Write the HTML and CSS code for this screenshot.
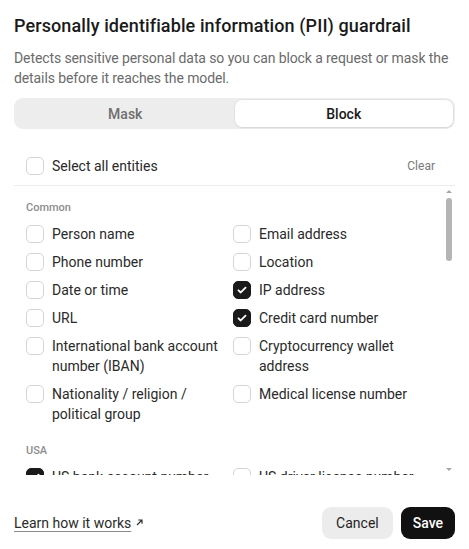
FILE: index.html
```html
<!DOCTYPE html>
<html lang="en">
<head>
<meta charset="utf-8">
<title>PII guardrail</title>
<link rel="stylesheet" href="styles.css">
</head>
<body>
<div class="dialog">
  <h1 class="title">Personally identifiable information (PII) guardrail</h1>
  <p class="desc">Detects sensitive personal data so you can block a request or mask the details before it reaches the model.</p>
  <div class="segmented">
    <button class="seg">Mask</button>
    <button class="seg active">Block</button>
  </div>
  <div class="select-all">
    <label class="item"><span class="box"></span><span class="label">Select all entities</span></label>
    <button class="clear">Clear</button>
  </div>
  <div class="list-wrap">
  <div class="list">
    <div class="section">
      <div class="section-title">Common</div>
      <div class="grid">
        <label class="item"><span class="box"></span><span class="label">Person name</span></label>
        <label class="item"><span class="box"></span><span class="label">Email address</span></label>
        <label class="item"><span class="box"></span><span class="label">Phone number</span></label>
        <label class="item"><span class="box"></span><span class="label">Location</span></label>
        <label class="item"><span class="box"></span><span class="label">Date or time</span></label>
        <label class="item"><span class="box checked"><svg viewBox="0 0 18 18"><path d="M5 9.3l2.6 2.5L13 6.4"/></svg></span><span class="label">IP address</span></label>
        <label class="item"><span class="box"></span><span class="label">URL</span></label>
        <label class="item"><span class="box checked"><svg viewBox="0 0 18 18"><path d="M5 9.3l2.6 2.5L13 6.4"/></svg></span><span class="label">Credit card number</span></label>
        <label class="item"><span class="box"></span><span class="label">International bank account number (IBAN)</span></label>
        <label class="item"><span class="box"></span><span class="label">Cryptocurrency wallet address</span></label>
        <label class="item"><span class="box"></span><span class="label">Nationality / religion / political group</span></label>
        <label class="item"><span class="box"></span><span class="label">Medical license number</span></label>
      </div>
    </div>
    <div class="section">
      <div class="section-title">USA</div>
      <div class="grid">
        <label class="item"><span class="box checked"><svg viewBox="0 0 18 18"><path d="M5 9.3l2.6 2.5L13 6.4"/></svg></span><span class="label">US bank account number</span></label>
        <label class="item"><span class="box"></span><span class="label">US driver license number</span></label>
        <label class="item"><span class="box"></span><span class="label">US ITIN</span></label>
        <label class="item"><span class="box"></span><span class="label">US passport number</span></label>
        <label class="item"><span class="box"></span><span class="label">US Social Security number</span></label>
      </div>
    </div>
    <div class="section">
      <div class="section-title">UK</div>
      <div class="grid">
        <label class="item"><span class="box"></span><span class="label">UK NHS number</span></label>
        <label class="item"><span class="box"></span><span class="label">UK NINO</span></label>
      </div>
    </div>
    <div class="section">
      <div class="section-title">Spain</div>
      <div class="grid">
        <label class="item"><span class="box"></span><span class="label">Spanish NIF</span></label>
        <label class="item"><span class="box"></span><span class="label">Spanish NIE</span></label>
      </div>
    </div>
    <div class="section">
      <div class="section-title">Italy</div>
      <div class="grid">
        <label class="item"><span class="box"></span><span class="label">Italian fiscal code</span></label>
        <label class="item"><span class="box"></span><span class="label">Italian driver license</span></label>
        <label class="item"><span class="box"></span><span class="label">Italian VAT code</span></label>
        <label class="item"><span class="box"></span><span class="label">Italian passport</span></label>
        <label class="item"><span class="box"></span><span class="label">Italian identity card</span></label>
      </div>
    </div>
    <div class="section">
      <div class="section-title">Poland</div>
      <div class="grid">
        <label class="item"><span class="box"></span><span class="label">Polish PESEL</span></label>
      </div>
    </div>
    <div class="section">
      <div class="section-title">Singapore</div>
      <div class="grid">
        <label class="item"><span class="box"></span><span class="label">Singapore NRIC/FIN</span></label>
        <label class="item"><span class="box"></span><span class="label">Singapore UEN</span></label>
      </div>
    </div>
    <div class="section">
      <div class="section-title">Australia</div>
      <div class="grid">
        <label class="item"><span class="box"></span><span class="label">Australian ABN</span></label>
        <label class="item"><span class="box"></span><span class="label">Australian ACN</span></label>
        <label class="item"><span class="box"></span><span class="label">Australian TFN</span></label>
        <label class="item"><span class="box"></span><span class="label">Australian Medicare</span></label>
      </div>
    </div>
    <div class="section">
      <div class="section-title">India</div>
      <div class="grid">
        <label class="item"><span class="box"></span><span class="label">Indian PAN</span></label>
        <label class="item"><span class="box"></span><span class="label">Indian Aadhaar</span></label>
        <label class="item"><span class="box"></span><span class="label">Indian vehicle registration</span></label>
        <label class="item"><span class="box"></span><span class="label">Indian voter ID</span></label>
        <label class="item"><span class="box"></span><span class="label">Indian passport</span></label>
      </div>
    </div>
  </div>
  <div class="scrollbar" aria-hidden="true">
    <span class="sb-arrow up"></span>
    <span class="sb-thumb"></span>
    <span class="sb-arrow down"></span>
  </div>
  </div>
  <div class="footer">
    <a class="learn" href="#">Learn how it works</a>
    <svg class="arrow" viewBox="0 0 7 7"><path d="M1 6L6 1M2.2 1H6v3.8"/></svg>
    <div class="actions">
      <button class="btn cancel">Cancel</button>
      <button class="btn save">Save</button>
    </div>
  </div>
</div>
</body>
</html>
```
FILE: styles.css
```css
* { box-sizing: border-box; }
html, body { margin: 0; padding: 0; background: #fff; }
body {
  font-family: Roboto, "Noto Sans", sans-serif;
  color: #1f1f1f;
}
.dialog {
  width: 469px;
  height: 549px;
  padding: 13px 14px 10px 14px;
  display: flex;
  flex-direction: column;
}
.title {
  margin: 0;
  font-size: 18px;
  line-height: 26px;
  font-weight: 500;
  letter-spacing: 0.1px;
  color: #1a1a1a;
}
.desc {
  margin: 9px 0 0;
  font-size: 14px;
  line-height: 20px;
  letter-spacing: -0.1px;
  color: #6b6b6b;
}
.segmented {
  margin-top: 10px;
  height: 31px;
  background: #ededed;
  border-radius: 9px;
  padding: 2px;
  display: grid;
  grid-template-columns: 1fr 1fr;
}
.seg {
  border: 0;
  background: transparent;
  font: inherit;
  font-size: 14px;
  font-weight: 500;
  color: #6f6f6f;
  border-radius: 7px;
  cursor: pointer;
}
.seg.active {
  background: #fff;
  color: #1a1a1a;
  box-shadow: 0 0 0 0.5px rgba(0,0,0,0.08), 0 1px 2px rgba(0,0,0,0.06);
}
.select-all {
  margin-top: 27px;
  padding: 0 20px 9px 12px;
  border-bottom: 1px solid #ececec;
  display: flex;
  align-items: center;
  justify-content: space-between;
}
.clear {
  border: 0;
  background: transparent;
  font: inherit;
  font-size: 12px;
  color: #7a7a7a;
  padding: 0;
}
.item {
  display: flex;
  align-items: flex-start;
  gap: 8px;
  font-size: 14px;
  line-height: 20px;
  color: #2a2a2a;
}
.box {
  flex: none;
  width: 18px;
  height: 18px;
  margin-top: 1px;
  border: 1px solid #d4d4d4;
  border-radius: 5px;
  background: #fff;
  display: flex;
  align-items: center;
  justify-content: center;
}
.box.checked {
  background: #1a1a1a;
  border-color: #1a1a1a;
}
.box svg {
  width: 18px;
  height: 18px;
  fill: none;
  stroke: #fff;
  stroke-width: 2;
  stroke-linecap: round;
  stroke-linejoin: round;
}
.list-wrap {
  position: relative;
}
.list {
  height: 289px;
  overflow-y: auto;
  padding: 14px 11px 0 12px;
  scrollbar-width: none;
}
.list::-webkit-scrollbar { display: none; }
.scrollbar {
  position: absolute;
  top: 0;
  right: 0;
  width: 12px;
  height: 289px;
  display: flex;
  flex-direction: column;
  align-items: center;
}
.sb-arrow {
  width: 0;
  height: 0;
  border-left: 3px solid transparent;
  border-right: 3px solid transparent;
}
.sb-arrow.up {
  margin-top: 4px;
  border-bottom: 3px solid #a8a8a8;
}
.sb-thumb {
  margin-top: 5px;
  width: 6px;
  height: 63px;
  border-radius: 3px;
  background: #b5b5b5;
}
.sb-arrow.down {
  margin-top: auto;
  margin-bottom: 4px;
  border-top: 3px solid #a8a8a8;
}
.section { margin-bottom: 19px; padding-right: 12px; }
.section-title {
  font-size: 11px;
  line-height: 16px;
  font-weight: 500;
  color: #8d8d8d;
  margin-bottom: 8px;
}
.grid {
  display: grid;
  grid-template-columns: 1fr 1fr;
  column-gap: 8px;
  row-gap: 8px;
}
.footer {
  margin-top: auto;
  display: flex;
  align-items: center;
}
.learn {
  font-size: 14px;
  color: #2a2a2a;
  text-decoration: underline;
  text-decoration-color: #8a8a8a;
  text-underline-offset: 3px;
}
.arrow {
  width: 7px;
  height: 7px;
  margin-left: 5px;
  margin-top: -2px;
  fill: none;
  stroke: #333;
  stroke-width: 1.2;
}
.actions {
  margin-left: auto;
  display: flex;
  gap: 8px;
}
.btn {
  border: 0;
  font: inherit;
  font-size: 14px;
  font-weight: 500;
  height: 32px;
  border-radius: 9px;
  padding: 0 14px;
  cursor: pointer;
}
.cancel { background: #ececec; color: #1f1f1f; font-weight: 400; }
.save { background: #111; color: #fff; font-weight: 500; padding: 0 12px; }
```
